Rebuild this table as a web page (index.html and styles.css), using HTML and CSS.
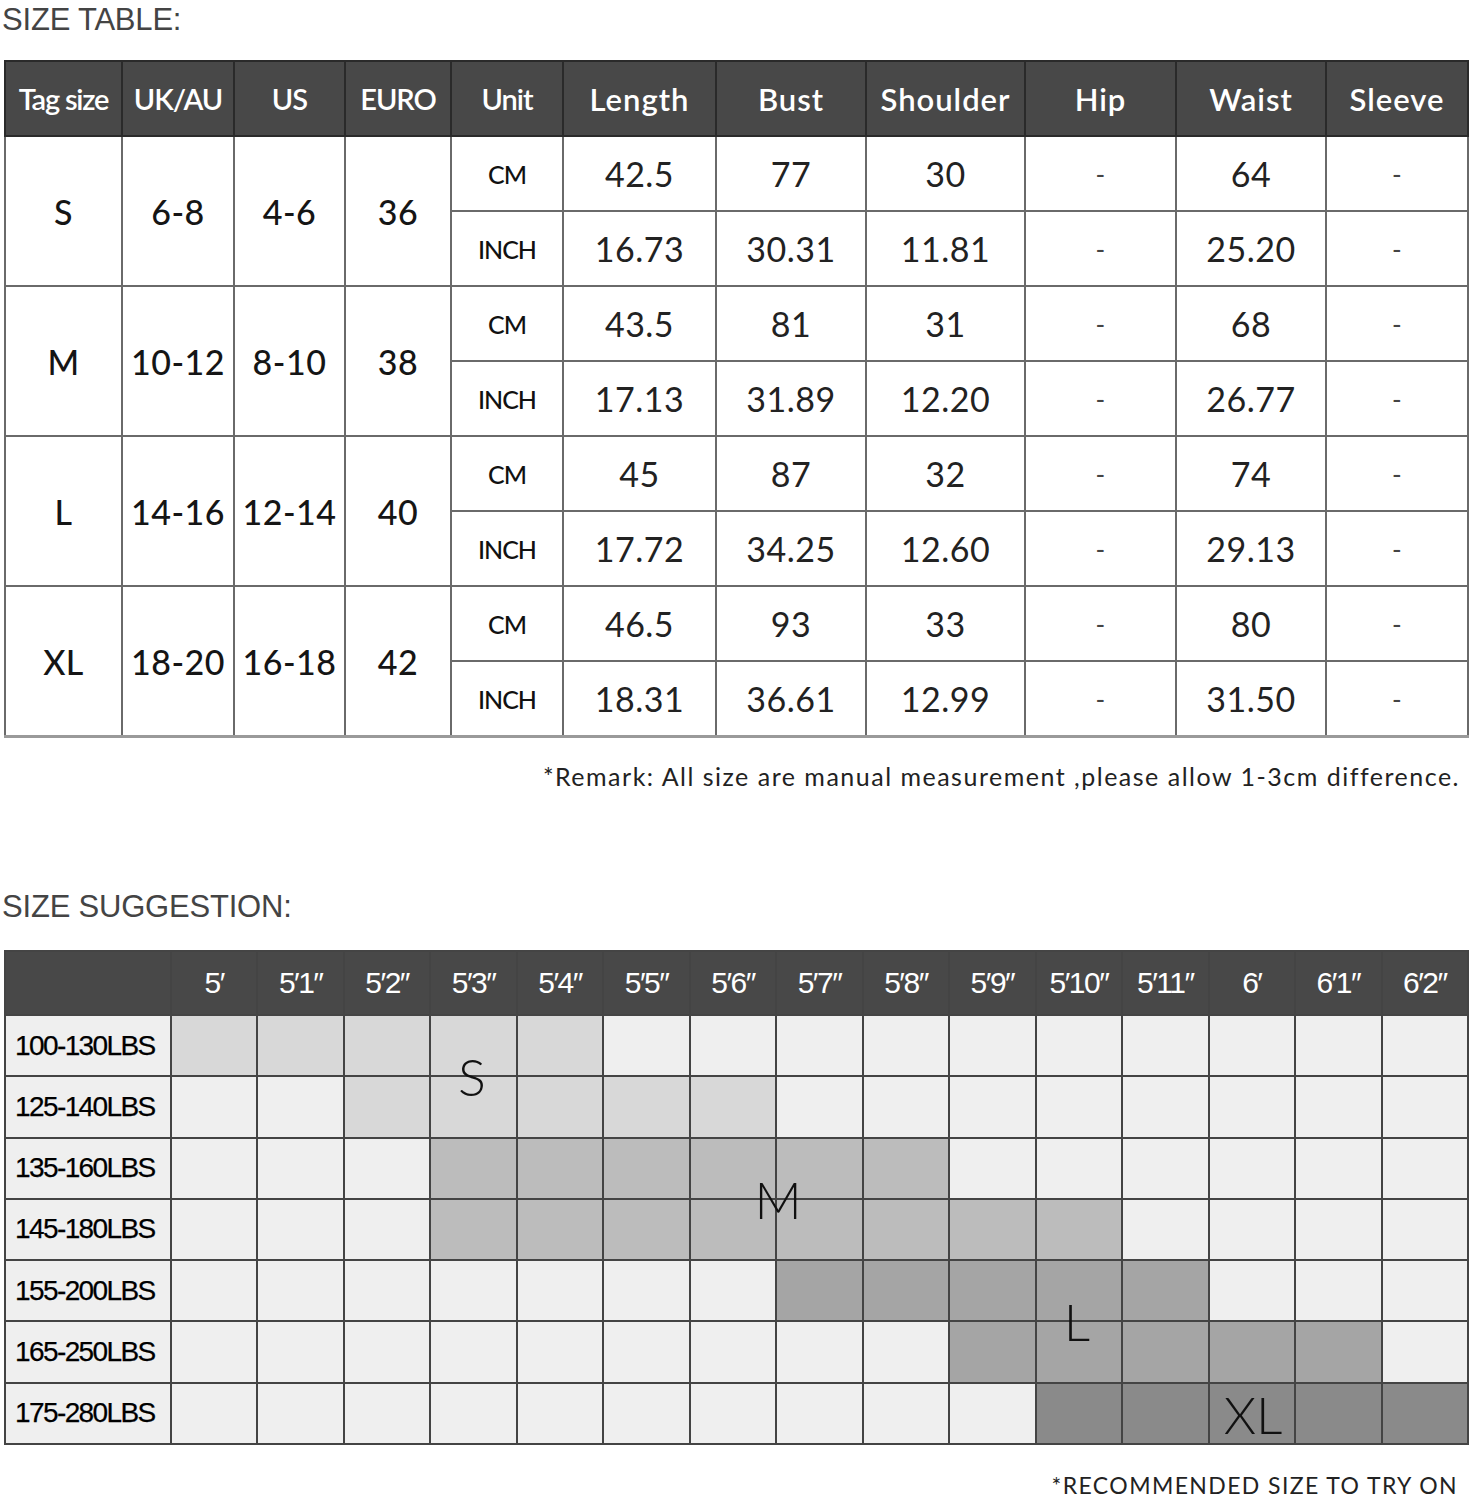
FILE: index.html
```html
<!DOCTYPE html>
<html>
<head>
<meta charset="utf-8">
<link rel="stylesheet" href="styles.css">
</head>
<body>
<h2 class="title title-table">SIZE TABLE:</h2>
<table class="size-table">
  <colgroup>
    <col style="width:117px"><col style="width:112px"><col style="width:111px"><col style="width:106px"><col style="width:112px"><col style="width:153px"><col style="width:150px"><col style="width:159px"><col style="width:151px"><col style="width:150px"><col style="width:142px">
  </colgroup>
  <thead>
    <tr>
      <th class="tag">Tag size</th><th class="cond">UK/AU</th><th class="cond">US</th><th class="cond">EURO</th><th class="cond">Unit</th><th>Length</th><th>Bust</th><th>Shoulder</th><th>Hip</th><th>Waist</th><th>Sleeve</th>
    </tr>
  </thead>
  <tbody>
    <tr><td rowspan="2" class="big">S</td><td rowspan="2" class="big">6-8</td><td rowspan="2" class="big">4-6</td><td rowspan="2" class="big">36</td><td class="unit">CM</td><td>42.5</td><td>77</td><td>30</td><td class="dash">-</td><td>64</td><td class="dash">-</td></tr>
    <tr><td class="unit">INCH</td><td>16.73</td><td>30.31</td><td>11.81</td><td class="dash">-</td><td>25.20</td><td class="dash">-</td></tr>
    <tr><td rowspan="2" class="big">M</td><td rowspan="2" class="big">10-12</td><td rowspan="2" class="big">8-10</td><td rowspan="2" class="big">38</td><td class="unit">CM</td><td>43.5</td><td>81</td><td>31</td><td class="dash">-</td><td>68</td><td class="dash">-</td></tr>
    <tr><td class="unit">INCH</td><td>17.13</td><td>31.89</td><td>12.20</td><td class="dash">-</td><td>26.77</td><td class="dash">-</td></tr>
    <tr><td rowspan="2" class="big">L</td><td rowspan="2" class="big">14-16</td><td rowspan="2" class="big">12-14</td><td rowspan="2" class="big">40</td><td class="unit">CM</td><td>45</td><td>87</td><td>32</td><td class="dash">-</td><td>74</td><td class="dash">-</td></tr>
    <tr><td class="unit">INCH</td><td>17.72</td><td>34.25</td><td>12.60</td><td class="dash">-</td><td>29.13</td><td class="dash">-</td></tr>
    <tr><td rowspan="2" class="big">XL</td><td rowspan="2" class="big">18-20</td><td rowspan="2" class="big">16-18</td><td rowspan="2" class="big">42</td><td class="unit">CM</td><td>46.5</td><td>93</td><td>33</td><td class="dash">-</td><td>80</td><td class="dash">-</td></tr>
    <tr><td class="unit">INCH</td><td>18.31</td><td>36.61</td><td>12.99</td><td class="dash">-</td><td>31.50</td><td class="dash">-</td></tr>
  </tbody>
</table>
<p class="remark">*Remark: All size are manual measurement ,please allow 1-3cm difference.</p>

<h2 class="title title-sugg">SIZE SUGGESTION:</h2>
<div class="sugg-wrap">
  <div class="sugg">
    <div class="h"></div><div class="h">5′</div><div class="h">5′1″</div><div class="h">5′2″</div><div class="h">5′3″</div><div class="h">5′4″</div><div class="h">5′5″</div><div class="h">5′6″</div><div class="h">5′7″</div><div class="h">5′8″</div><div class="h">5′9″</div><div class="h">5′10″</div><div class="h">5′11″</div><div class="h">6′</div><div class="h">6′1″</div><div class="h">6′2″</div>

    <div class="lbl">100-130LBS</div><div class="c s"></div><div class="c s"></div><div class="c s"></div><div class="c s"></div><div class="c s"></div><div class="c"></div><div class="c"></div><div class="c"></div><div class="c"></div><div class="c"></div><div class="c"></div><div class="c"></div><div class="c"></div><div class="c"></div><div class="c"></div>

    <div class="lbl">125-140LBS</div><div class="c"></div><div class="c"></div><div class="c s"></div><div class="c s"></div><div class="c s"></div><div class="c s"></div><div class="c s"></div><div class="c"></div><div class="c"></div><div class="c"></div><div class="c"></div><div class="c"></div><div class="c"></div><div class="c"></div><div class="c"></div>

    <div class="lbl">135-160LBS</div><div class="c"></div><div class="c"></div><div class="c"></div><div class="c m"></div><div class="c m"></div><div class="c m"></div><div class="c m"></div><div class="c m"></div><div class="c m"></div><div class="c"></div><div class="c"></div><div class="c"></div><div class="c"></div><div class="c"></div><div class="c"></div>

    <div class="lbl">145-180LBS</div><div class="c"></div><div class="c"></div><div class="c"></div><div class="c m"></div><div class="c m"></div><div class="c m"></div><div class="c m"></div><div class="c m"></div><div class="c m"></div><div class="c m"></div><div class="c m"></div><div class="c"></div><div class="c"></div><div class="c"></div><div class="c"></div>

    <div class="lbl">155-200LBS</div><div class="c"></div><div class="c"></div><div class="c"></div><div class="c"></div><div class="c"></div><div class="c"></div><div class="c"></div><div class="c l"></div><div class="c l"></div><div class="c l"></div><div class="c l"></div><div class="c l"></div><div class="c"></div><div class="c"></div><div class="c"></div>

    <div class="lbl">165-250LBS</div><div class="c"></div><div class="c"></div><div class="c"></div><div class="c"></div><div class="c"></div><div class="c"></div><div class="c"></div><div class="c"></div><div class="c"></div><div class="c l"></div><div class="c l"></div><div class="c l"></div><div class="c l"></div><div class="c l"></div><div class="c"></div>

    <div class="lbl">175-280LBS</div><div class="c"></div><div class="c"></div><div class="c"></div><div class="c"></div><div class="c"></div><div class="c"></div><div class="c"></div><div class="c"></div><div class="c"></div><div class="c"></div><div class="c xl"></div><div class="c xl"></div><div class="c xl"></div><div class="c xl"></div><div class="c xl"></div>
  </div>
  <span class="zone zone-s">S</span>
  <span class="zone zone-m">M</span>
  <span class="zone zone-l">L</span>
  <span class="zone zone-xl">XL</span>
</div>
<p class="note">*RECOMMENDED SIZE TO TRY ON</p>
</body>
</html>
```

FILE: styles.css
```css
html, body {
  margin: 0;
  padding: 0;
  background: #ffffff;
}
body {
  width: 1474px;
  font-family: "Lato", "Open Sans", sans-serif;
  color: #222;
}

.title {
  margin: 0;
  font-family: "Liberation Sans", Arial, sans-serif;
  font-weight: 400;
  font-size: 31px;
  color: #444;
  letter-spacing: -0.2px;
  line-height: 40px;
  padding-left: 2px;
}
.title-table {
  height: 40px;
  margin-bottom: 20px;
}

.size-table {
  margin-left: 4px;
  width: 1463px;
  table-layout: fixed;
  border-collapse: collapse;
  border-bottom: 3px solid #9a9a9a;
}
.size-table th {
  height: 73px;
  background: #484848;
  color: #fff;
  font-weight: 600;
  font-size: 31px;
  border: 2px solid #2a2a2a;
  padding: 0;
  text-align: center;
  letter-spacing: 1px;
}
.size-table th.cond {
  letter-spacing: -1px;
  font-size: 29px;
}
.size-table th.tag {
  font-size: 29px;
  letter-spacing: -1.2px;
}
.size-table td {
  height: 73px;
  padding: 0;
  text-align: center;
  border: 2px solid #6a6a6a;
  font-size: 34px;
  font-weight: 400;
  color: #222;
  letter-spacing: 0.5px;
}
.size-table td.big {
  font-weight: 500;
  font-size: 34px;
  letter-spacing: 0.5px;
  color: #151515;
}
.size-table td.unit {
  font-size: 25px;
  font-weight: 500;
  letter-spacing: -1px;
  color: #111;
}
.size-table td.dash {
  font-size: 26px;
  color: #444;
}

.remark {
  margin: 23px 14px 0 0;
  text-align: right;
  font-size: 25px;
  letter-spacing: 1.5px;
  color: #222;
  line-height: 30px;
}

.title-sugg {
  margin-top: 96px;
  height: 40px;
  margin-bottom: 23px;
}

.sugg-wrap {
  position: relative;
  margin-left: 4px;
  width: 1465px;
}
.sugg {
  display: grid;
  grid-template-columns: 164px repeat(15, 1fr);
  grid-template-rows: 62px repeat(7, 1fr);
  height: 495px;
  box-sizing: border-box;
  gap: 2px;
  border: 2px solid #444;
  background: #444;
}
.sugg .h {
  background: #484848;
  color: #fff;
  font-family: "Liberation Sans", Arial, sans-serif;
  font-size: 30px;
  letter-spacing: -1.5px;
  display: flex;
  align-items: center;
  justify-content: center;
}
.sugg .lbl {
  background: #efefef;
  font-family: "Liberation Sans", Arial, sans-serif;
  font-size: 28px;
  letter-spacing: -1.6px;
  color: #000;
  display: flex;
  align-items: center;
  padding-left: 9px;
  -webkit-text-stroke: 0.25px #000;
}
.sugg .c { background: #efefef; }
.sugg .c.s { background: #d8d8d8; }
.sugg .c.m { background: #bcbcbc; }
.sugg .c.l { background: #a5a5a5; }
.sugg .c.xl { background: #8a8a8a; }

.zone {
  position: absolute;
  font-family: "Lato", sans-serif;
  font-weight: 300;
  font-size: 52px;
  line-height: 1;
  color: #111;
  transform: translate(-50%, -50%);
}
.zone-s { left: 468px; top: 126px; }
.zone-m { left: 774px; top: 249px; }
.zone-l { left: 1073px; top: 371px; }
.zone-xl { left: 1249px; top: 464px; }

.note {
  margin: 25px 16px 0 0;
  text-align: right;
  font-size: 23px;
  letter-spacing: 1.4px;
  color: #222;
  line-height: 30px;
}
```
